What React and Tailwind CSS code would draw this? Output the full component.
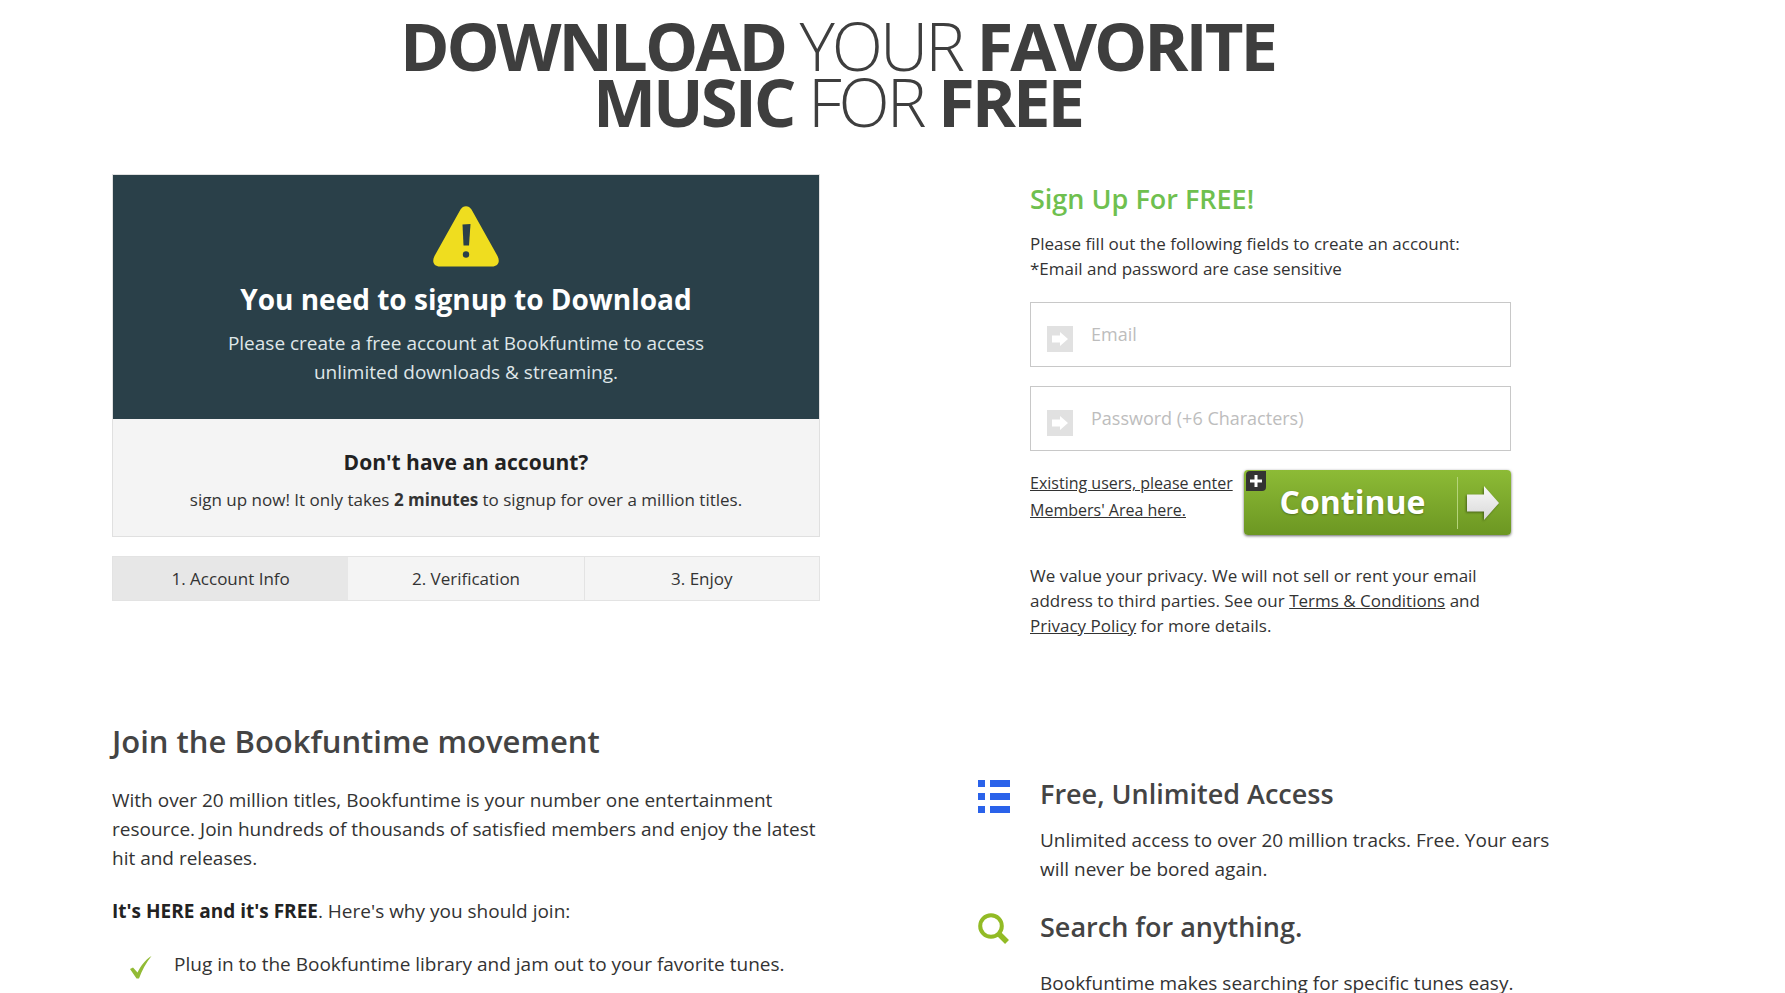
const steps = ['1. Account Info', '2. Verification', '3. Enjoy']

function WarningIcon() {
  return (
    <svg viewBox="0 0 66 61" className="w-[66px] h-[61px]" aria-hidden="true">
      <path
        d="M27.5 3.5C30-1 36-1 38.500 3.500L64.500 50C67.500 56 65 60.500 59 60.500H7C1 60.500-1.500 56 1.500 50Z"
        fill="#efdd1f"
      />
      <path d="M29.500 18.500L37.500 18L36 39.500H30.500Z" fill="#2a4049" />
      <circle cx="33" cy="48.500" r="3.200" fill="#2a4049" />
    </svg>
  )
}

function FieldArrow() {
  return (
    <svg viewBox="0 0 26 26" className="w-[26px] h-[26px] mt-2 shrink-0" aria-hidden="true">
      <rect width="26" height="26" fill="#e1e1e1" />
      <path d="M5 9.500H13V6L21 13L13 20V16.500H5Z" fill="#fff" />
    </svg>
  )
}

function ListIcon() {
  return (
    <svg viewBox="0 0 32 33" className="w-8 h-[33px]" aria-hidden="true">
      <path
        d="M0 0H7V7H0ZM12 0H32V7H12ZM0 13H7V20H0ZM12 13H32V20H12ZM0 26H7V33H0ZM12 26H32V33H12Z"
        fill="#2a62ea"
      />
    </svg>
  )
}

function SearchIcon() {
  return (
    <svg viewBox="0 0 32 32" className="w-8 h-8" fill="none" stroke="#92bb25" aria-hidden="true">
      <circle cx="13" cy="13" r="10.800" strokeWidth="4" />
      <path d="M20.500 20.500L29 29" strokeWidth="5.500" />
    </svg>
  )
}

function CheckIcon() {
  return (
    <svg viewBox="0 0 22 23" className="w-[22px] h-[23px] shrink-0" aria-hidden="true">
      <path d="M0 13L3 11.500L7.500 16.500C11 9.500 15 4 21.500 0C16 7 12 14 9 22.500H6.500Z" fill="#92bb35" />
    </svg>
  )
}

function Field({ id, type, placeholder }) {
  return (
    <label
      htmlFor={id}
      className="flex items-center gap-[18px] h-[65px] px-4 border border-[#c8c8c8] bg-white"
    >
      <FieldArrow />
      <input
        id={id}
        type={type}
        placeholder={placeholder}
        aria-label={placeholder}
        className="min-w-0 flex-1 text-[18px] outline-none placeholder:text-[#bdbdbd]"
      />
    </label>
  )
}

function Feature({ icon, title, children }) {
  return (
    <section className="flex gap-[30px]">
      <div className="w-8 shrink-0 pt-1">{icon}</div>
      <div>
        <h3 className="text-[27px] leading-9 font-semibold text-[#444]">{title}</h3>
        {children}
      </div>
    </section>
  )
}

function SignupCard() {
  return (
    <div>
      <div className="border border-[#e0e0e0] bg-[#f4f4f4] text-center">
        <div className="flex flex-col items-center bg-[#2a4049] pt-[31px] pb-8">
          <WarningIcon />
          <h2 className="mt-[13px] text-[28px] leading-[38px] font-bold text-white">
            You need to signup to Download
          </h2>
          <p className="mt-[11px] max-w-[500px] text-[19px] leading-[29px] text-[#dfe6e8]">
            Please create a free account at Bookfuntime to access unlimited downloads &amp; streaming.
          </p>
        </div>
        <div className="pt-7 pb-6">
          <h3 className="text-[21px] leading-[30px] font-bold text-[#222]">Don't have an account?</h3>
          <p className="mt-2.5 text-[17px] leading-[25px]">
            sign up now! It only takes <b>2 minutes</b> to signup for over a million titles.
          </p>
        </div>
      </div>
      <ol className="mt-[19px] grid grid-cols-3 border border-[#e3e3e3] bg-[#f4f4f4] text-center text-[17px] leading-[43px]">
        {steps.map((step, i) => (
          <li key={step} className={i === 0 ? 'bg-[#e7e7e7]' : i === 2 ? 'border-l border-[#e3e3e3]' : ''}>
            {step}
          </li>
        ))}
      </ol>
    </div>
  )
}

function SignupForm() {
  return (
    <form className="px-[52px] pt-[7px]" onSubmit={(e) => e.preventDefault()}>
      <h2 className="text-[27px] leading-9 font-semibold text-[#6fc04f]">Sign Up For FREE!</h2>
      <p className="mt-3.5 text-[17px] leading-[25px]">
        Please fill out the following fields to create an account:
        <br />
        *Email and password are case sensitive
      </p>
      <div className="mt-[21px] flex flex-col gap-[19px]">
        <Field id="email" type="email" placeholder="Email" />
        <Field id="password" type="password" placeholder="Password (+6 Characters)" />
      </div>
      <div className="mt-[19px] flex items-start justify-between">
        <a href="#members" className="text-[16px] leading-[27px] underline whitespace-nowrap">
          Existing users, please enter
          <br />
          Members' Area here.
        </a>
        <button
          type="submit"
          className="relative flex h-[65px] w-[267px] shrink-0 items-center rounded-[4px] bg-linear-to-b from-[#8dbb36] to-[#6c9722] shadow-[0_1px_3px_rgba(0,0,0,0.6)]"
        >
          <span className="absolute left-0.5 top-px flex size-5 items-center justify-center rounded-tl-[4px] rounded-br-[4px] bg-[#333]">
            <svg viewBox="0 0 12 12" className="size-3" aria-hidden="true">
              <path d="M4.500 0H7.500V4.500H12V7.500H7.500V12H4.500V7.500H0V4.500H4.500Z" fill="#fff" />
            </svg>
          </span>
          <span className="flex-1 pl-1 text-[32px] leading-[44px] pb-0.5 font-bold text-white [text-shadow:0_1px_2px_rgba(0,0,0,0.3)]">
            Continue
          </span>
          <span className="flex h-[52px] w-[54px] items-center justify-center border-l border-[#b5d47a] pr-1">
            <svg viewBox="0 0 32 34" className="h-[34px] w-8 drop-shadow-[-1px_1px_1px_rgba(0,0,0,0.4)]" aria-hidden="true">
              <defs>
                <linearGradient id="arrow" x1="0" y1="0" x2="0" y2="1">
                  <stop offset="0" stopColor="#f8f8f8" />
                  <stop offset="1" stopColor="#d9d9d9" />
                </linearGradient>
              </defs>
              <path d="M0 8.500H17V0L32 17L17 34V25.500H0Z" fill="url(#arrow)" />
            </svg>
          </span>
        </button>
      </div>
      <p className="mt-7 text-[17px] leading-[25px]">
        We value your privacy. We will not sell or rent your email address to third parties. See our{' '}
        <a href="#terms" className="underline">Terms &amp; Conditions</a> and{' '}
        <a href="#privacy" className="underline">Privacy Policy</a> for more details.
      </p>
    </form>
  )
}

export default function App() {
  return (
    <div className="h-screen overflow-hidden bg-white pl-[112px] pr-[222px] pt-[17px] font-['Open_Sans','Noto_Sans',sans-serif] text-[#333]">
      <h1 className="text-center text-[67px] leading-[56px] font-[350] tracking-[-3px] text-[#3e3e3e]">
        <b className="font-bold">DOWNLOAD</b> YOUR <b className="font-bold">FAVORITE</b>
        <br />
        <b className="font-bold">MUSIC</b> FOR <b className="font-bold">FREE</b>
      </h1>

      <main className="mt-[45px] grid grid-cols-[708fr_585fr] gap-x-[158px]">
        <SignupCard />
        <SignupForm />

        <section className="mt-[81px] text-[19px] leading-[29px]">
          <h2 className="text-[31px] leading-[44px] font-semibold text-[#444]">Join the Bookfuntime movement</h2>
          <p className="mt-[23px]">
            With over 20 million titles, Bookfuntime is your number one entertainment resource. Join hundreds of
            thousands of satisfied members and enjoy the latest hit and releases.
          </p>
          <p className="mt-6">
            <b className="text-[#222]">It's HERE and it's FREE</b>. Here's why you should join:
          </p>
          <ul className="mt-6">
            <li className="flex gap-[22px] pl-[18px]">
              <span className="pt-1.5"><CheckIcon /></span>
              Plug in to the Bookfuntime library and jam out to your favorite tunes.
            </li>
          </ul>
        </section>

        <div className="mt-[138px] text-[19px] leading-[29px]">
          <Feature icon={<ListIcon />} title="Free, Unlimited Access">
            <p className="mt-3.5">
              Unlimited access to over 20 million tracks. Free. Your ears will never be bored again.
            </p>
          </Feature>
          <div className="mt-[25px]">
            <Feature icon={<SearchIcon />} title="Search for anything.">
              <p className="mt-6">Bookfuntime makes searching for specific tunes easy.</p>
            </Feature>
          </div>
        </div>
      </main>
    </div>
  )
}
